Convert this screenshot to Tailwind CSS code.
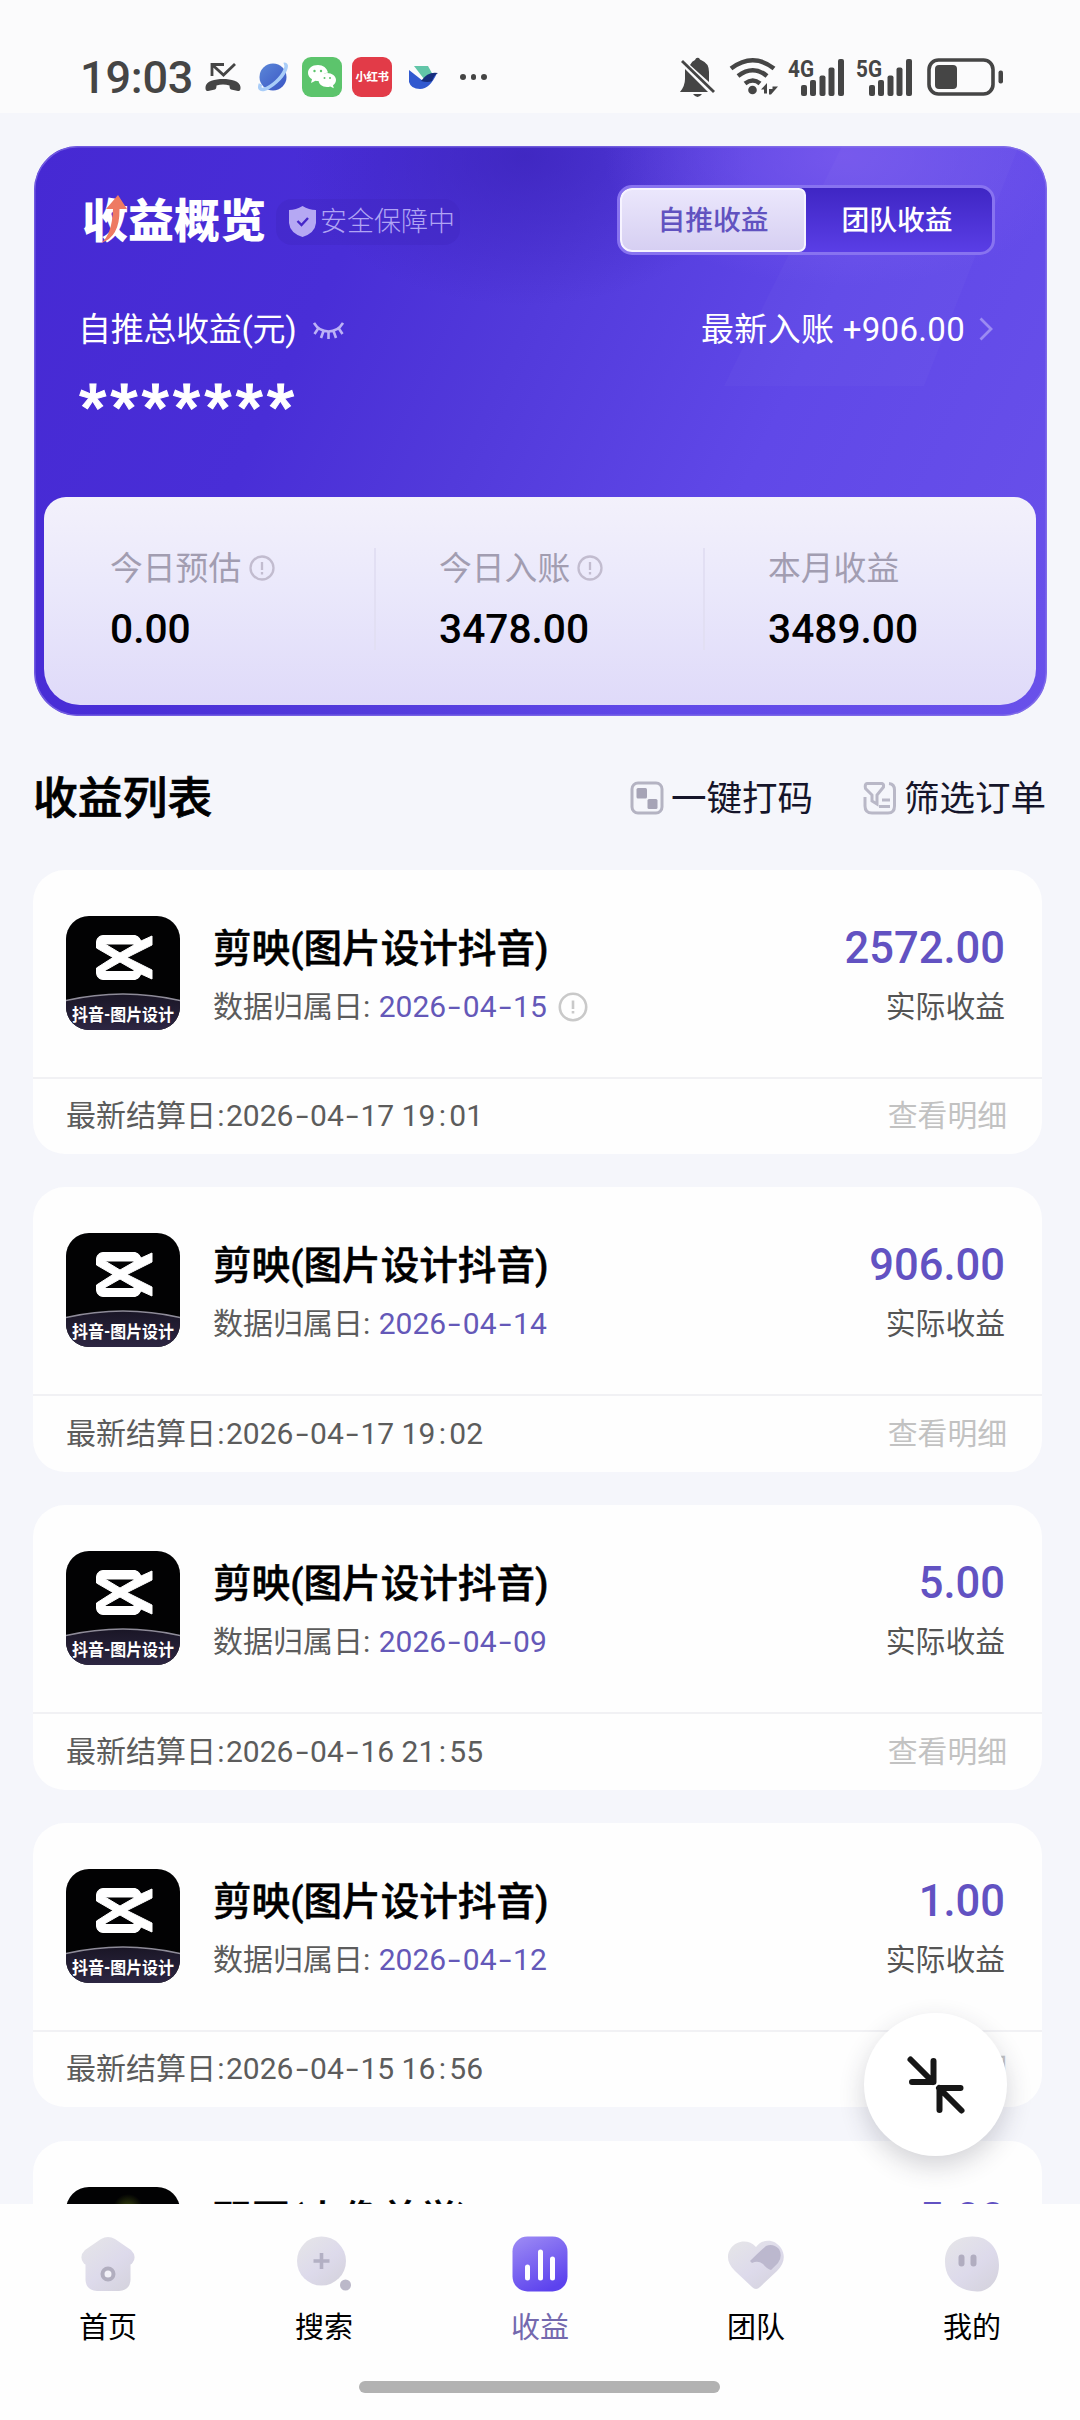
<!DOCTYPE html>
<html lang="zh-CN">
<head>
<meta charset="utf-8">
<title>收益</title>
<script src="https://cdn.jsdelivr.net/npm/@tailwindcss/browser@4"></script>
</head>
<body class="w-[1080px] h-[2420px] overflow-hidden bg-[#f5f6fb] font-[Roboto,'Noto_Sans_CJK_SC',sans-serif] text-black flex flex-col relative">

<!-- status bar -->
<header class="h-[113px] shrink-0 bg-[#fbfbfc] pl-[80px] pr-[76px] pt-[41px] flex justify-between items-start">
  <div class="flex items-center h-[72px]">
    <span class="text-[45px] leading-[72px] font-medium text-[#454545] w-[125px] pt-[2px] tracking-[-0.2px]">19:03</span>
    <svg class="w-9 h-[30px]" viewBox="0 0 36 30" fill="none" stroke="#454545"><path d="M7 14V2.500H19M7 2.500L18.500 13L30 2" stroke-width="2.800"/><path d="M0.500 25C1 19 10 17 18 17S35 19 35.500 25Q35.800 29.500 33 29L26 27.500Q24.500 27 24.500 23.500Q18 21.500 11.500 23.500Q11.500 27 10 27.500L3 29Q.200 29.500 .500 25Z" fill="#454545" stroke="none"/></svg>
    <svg class="w-[30px] h-[30px] ml-[17px]" viewBox="0 0 30 30"><defs><linearGradient id="pl" x1="0" y1="0" x2="1" y2="1"><stop stop-color="#5b87d8"/><stop offset="1" stop-color="#3a55c4"/></linearGradient></defs><circle cx="15" cy="15" r="13.500" fill="url(#pl)"/><path d="M2.500 22C-1 31 9 28 18 20S31 1 26 2.500" fill="none" stroke="#a9cdf8" stroke-width="3.600"/></svg>
    <svg class="w-10 h-10 ml-[14px]" viewBox="0 0 40 40"><rect width="40" height="40" rx="9" fill="#5cc46c"/><path d="M16 8C10 8 6 11.500 6 16c0 2.500 1.500 4.700 4 6.200L9 26l4.500-2.300q2 .500 4 .300A9 9 0 0 1 26 15.500C25 11 21 8 16 8Z" fill="#fff"/><path d="M25 16c5 0 9 3 9 7 0 2.200-1.200 4-3 5.300l.800 3-3.600-1.800Q27 30 25 30c-5 0-8.500-3-8.500-7s3.500-7 8.500-7Z" fill="#fff"/><g fill="#5cc46c"><circle cx="12.500" cy="14" r="1.200"/><circle cx="19" cy="14" r="1.200"/><circle cx="22.500" cy="21" r="1"/><circle cx="28" cy="21" r="1"/></g></svg>
    <span class="w-10 h-10 ml-[10px] rounded-[9px] bg-[#e23b48] text-white font-bold text-[11.500px] leading-10 text-center tracking-[-0.5px]">小红书</span>
    <svg class="w-[30px] h-6 ml-[16px]" viewBox="0 0 30 24"><path d="M6 1H20L25 10 16 14Z" fill="#62c5a8"/><path d="M1 5L15 16 27 9Q29 9 29 8Q22 24 12 24Q3 24 1 17Z" fill="#3159cf"/><path d="M13 16Q20 6 30 8Q26 10 24 16Q20 18 13 16Z" fill="#162d7d"/></svg>
    <span class="flex gap-[5px] ml-[22px]"><i class="w-[5.500px] h-[5.500px] rounded-full bg-[#444]"></i><i class="w-[5.500px] h-[5.500px] rounded-full bg-[#444]"></i><i class="w-[5.500px] h-[5.500px] rounded-full bg-[#444]"></i></span>
  </div>
  <svg class="w-[324px] h-[40px] mt-[16px] overflow-visible" viewBox="0 0 324 40" fill="#454545">
    <path d="M5 12L28 35H0Q5 29 5 22Z M10 8Q12 4 15 3Q16 0 19 1Q20 3 21 3Q29 6 29 15V25Z"/><path d="M2 4L34 35" stroke="#454545" stroke-width="2.800"/><path d="M13 37H22Q17.500 43 13 37Z"/>
    <g fill="none" stroke="#454545" stroke-width="4.500"><path d="M51 11.500Q73 -5 94 11.500"/><path d="M58 19Q73 7.500 87 19"/><path d="M65 26.500Q73 20.500 80 26.500"/></g><circle cx="72.500" cy="33" r="4.300"/><path d="M81 32.500l6-6.500v10.500h-3V32.500Z M89 26v6h3.500v-2.500h5.500L91 37.500h-2Z"/>
    <g><rect x="121" y="28" width="6" height="11" rx="2"/><rect x="130" y="23" width="6" height="16" rx="2"/><rect x="139.500" y="18.500" width="6" height="20.500" rx="2"/><rect x="148.500" y="10.500" width="6" height="28.500" rx="2"/><rect x="158" y="2" width="6" height="37" rx="2"/></g>
    <g><rect x="189" y="28" width="6" height="11" rx="2"/><rect x="198" y="23" width="6" height="16" rx="2"/><rect x="207.500" y="18.500" width="6" height="20.500" rx="2"/><rect x="216.500" y="10.500" width="6" height="28.500" rx="2"/><rect x="226" y="2" width="6" height="37" rx="2"/></g>
    <g font-size="24" font-weight="700" font-family="Roboto"><text x="108" y="19.500" textLength="26" lengthAdjust="spacingAndGlyphs">4G</text><text x="176" y="19.500" textLength="26" lengthAdjust="spacingAndGlyphs">5G</text></g>
    <rect x="249" y="3" width="64" height="34" rx="9.500" fill="none" stroke="#454545" stroke-width="3.600"/><rect x="255" y="8" width="22" height="24" rx="4"/><rect x="318.500" y="13.500" width="4.500" height="13" rx="2"/>
  </svg>
</header>

<main class="h-[2091px] shrink-0 overflow-hidden flex flex-col pt-[33px]">

  <!-- overview card -->
  <section class="relative w-[1013px] h-[570px] ml-[34px] shrink-0 rounded-[44px] overflow-hidden bg-[linear-gradient(115deg,#4629d3_0%,#492ed7_28%,#523adb_45%,#6048e8_68%,#6951ea_100%)] pl-[47px] pr-[51px]">
    <svg class="absolute inset-0 w-full h-full" viewBox="0 0 1013 570" preserveAspectRatio="none"><defs>
      <radialGradient id="dk"><stop stop-color="#3a22b8" stop-opacity=".7"/><stop offset="1" stop-color="#3a22b8" stop-opacity="0"/></radialGradient>
      <radialGradient id="lt"><stop stop-color="#7a5bee" stop-opacity=".8"/><stop offset="1" stop-color="#7a5bee" stop-opacity="0"/></radialGradient></defs>
      <ellipse cx="490" cy="10" rx="230" ry="150" fill="url(#dk)"/><ellipse cx="810" cy="10" rx="240" ry="130" fill="url(#lt)"/>
      <path d="M808 0H985L890 240H690Z" fill="#fff" opacity=".025"/>
      <rect x=".75" y=".75" width="1011.500" height="568.500" rx="43.500" fill="none" stroke="#8d7be8" stroke-opacity=".6" stroke-width="1.500"/></svg>
    <div class="relative h-[69px] mt-[39px] flex items-center">
      <h1 class="relative text-[46px] leading-[66px] pt-[3px] ml-[1px] font-black text-white">收益概览
        <svg class="absolute left-[18px] top-[8px] w-[28px] h-[50px]" viewBox="0 0 28 50"><path d="M1 50Q12 42 13 16H6L18 2L27 16H19.500Q20 44 1 50Z" fill="#ee7a62"/></svg>
      </h1>
      <span class="ml-[10px] mt-[4px] h-[46px] w-[184px] rounded-[16px] bg-[#3f25bd]/35 pl-[13px] flex items-center text-[27px] leading-[46px] font-light text-[#b0a4f4]">
        <svg class="w-[27px] h-[31px] mr-[4px] shrink-0" viewBox="0 0 27 31"><path d="M13.500 0Q20 4 27 4V17Q26 27 13.500 31Q1 27 0 17V4Q7 4 13.500 0Z" fill="#b5a8f3"/><path d="M8.500 15L12.500 19L19 12" fill="none" stroke="#4527c8" stroke-width="2.400"/></svg>安全保障中</span>
      <div class="ml-auto w-[378px] h-[70px] rounded-[15px] border-[3px] border-[#8873f0] bg-[linear-gradient(#3f26c4,#5a3ee6)] flex text-[27.800px] leading-[64px] font-medium text-center text-white mr-[1px]">
        <span class="w-[186px] h-[64px] rounded-[12px] rounded-r-[7px] border-2 border-[#f6f3ff] bg-[linear-gradient(#ebe7fc,#d6cff2)] text-[#6152c0] leading-[62px]">自推收益</span>
        <span class="flex-1 pr-[4px] leading-[66px]">团队收益</span>
      </div>
    </div>
    <div class="relative h-[50px] mt-[49px] flex items-center text-white text-[33px] -ml-[3px] pt-[1px]">
      <span class="tracking-[-0.3px] mt-[2px]">自推总收益(元)</span>
      <svg class="w-[31px] h-[20px] ml-[17px] mt-[5px]" viewBox="0 0 31 20" fill="none" stroke="#bdb2f6" stroke-width="2.600"><path d="M1 2Q6 10.500 15.500 10.500T30 2"/><path d="M5.500 7L1.500 13M10.500 10L8 17M15.500 10.500V18M20.500 10L23 17M25.500 7L29.500 13"/></svg>
      <span class="ml-auto mt-[2px] tracking-[0.3px]">最新入账 +906.00</span>
      <svg class="w-[14px] h-[24px] ml-[14px] mr-[3px]" viewBox="0 0 14 24" fill="none" stroke="#9b8bf2" stroke-width="2.800"><path d="M1.500 1.500L12 12L1.500 22.500"/></svg>
    </div>
    <div class="relative text-white font-black text-[58px] leading-[60px] mt-[22px] tracking-[4.300px] -ml-[2px] [-webkit-text-stroke:1px_white]">*******</div>
    <!-- stats panel -->
    <div class="absolute left-[10px] right-[11px] top-[351px] h-[208px] rounded-t-[22px] rounded-b-[36px] bg-[linear-gradient(#f3f1fb,#eae8fb_45%,#dfdaf9)] pt-[47px] pl-[66px] flex">
      <div class="w-[329px] relative"><div class="text-[32.800px] leading-[50px] text-[#a29db1] flex items-center">今日预估<svg class="w-[26px] h-[26px] ml-[8px] -mt-[2px]" viewBox="0 0 26 26" fill="none" stroke="#c2bccf" stroke-width="2.300"><circle cx="13" cy="13" r="11.500"/><path d="M13 7V15M13 17V19.500"/></svg></div><div class="text-[40.700px] leading-[56px] mt-[7px] font-medium">0.00</div><i class="absolute right-[63px] top-[4px] w-[2px] h-[102px] bg-[#e2dff3]"></i></div>
      <div class="w-[329px] relative"><div class="text-[32.800px] leading-[50px] text-[#a29db1] flex items-center">今日入账<svg class="w-[26px] h-[26px] ml-[7px] -mt-[2px]" viewBox="0 0 26 26" fill="none" stroke="#c2bccf" stroke-width="2.300"><circle cx="13" cy="13" r="11.500"/><path d="M13 7V15M13 17V19.500"/></svg></div><div class="text-[40.700px] leading-[56px] mt-[7px] font-medium">3478.00</div><i class="absolute right-[63px] top-[4px] w-[2px] h-[102px] bg-[#e2dff3]"></i></div>
      <div><div class="text-[32.800px] leading-[50px] text-[#a29db1]">本月收益</div><div class="text-[40.700px] leading-[56px] mt-[7px] font-medium">3489.00</div></div>
    </div>
  </section>

  <!-- list header -->
  <div class="h-[70px] mt-[47px] shrink-0 pl-[33px] pr-[34px] flex items-center text-[35.500px] text-[#15152a]">
    <h2 class="text-[44.800px] font-medium [-webkit-text-stroke:0.7px_black] text-black mr-auto mt-[2px]">收益列表</h2>
    <svg class="w-[34px] h-[34px] mr-[7px]" viewBox="0 0 34 34"><rect x="2" y="2" width="30" height="30" rx="6" fill="none" stroke="#b4b3c2" stroke-width="3"/><rect x="6.500" y="7" width="10.500" height="10.500" rx="1.500" fill="#a6a4b6"/><rect x="17.500" y="18" width="10" height="10" rx="1.500" fill="#a6a4b6"/></svg>
    <span class="mt-[3px]">一键打码</span>
    <svg class="w-[34px] h-[34px] ml-[50px] mr-[7px]" viewBox="0 0 34 34" fill="none" stroke="#b9b8c7" stroke-width="3"><path d="M26 2.500Q31.500 3 31.500 9V25Q31.500 32 25 32H9Q2 32 2 25V16"/><path d="M4 2.500H19Q21 3 20.500 6L14 14V23L9 20V14L2.500 7.500Q1.500 3 4 2.500Z"/><path d="M19 19H27M16 25.500H27"/></svg>
    <span class="mt-[3px]">筛选订单</span>
  </div>

  <div id="list" class="mt-[36.500px] ml-[33px] w-[1009px] flex flex-col gap-[33.250px]"></div>
</main>

<!-- tab bar -->
<nav class="h-[216px] shrink-0 bg-[#fefefe] pt-[32px] relative">
  <div class="grid grid-cols-5 text-center text-[29px] leading-[44px]">
    <div class="flex flex-col items-center gap-[14px]"><svg class="w-14 h-14" viewBox="0 0 56 56"><defs><linearGradient id="g" x1="0" y1="0" x2=".8" y2="1"><stop stop-color="#e6e6e8"/><stop offset=".6" stop-color="#dddaeb"/><stop offset="1" stop-color="#d5d3de"/></linearGradient></defs><path d="M21 3Q28-1 35 3L51 14Q57 20 53 26Q52 28 50.500 28.500V44Q50 54 39 55H17Q6 54 5.500 44V28.500Q4 28 3 26Q-1 20 5 14Z" fill="url(#g)"/><circle cx="28" cy="38" r="5.500" fill="#f2f1f8" stroke="#b1aebf" stroke-width="4"/></svg>首页</div>
    <div class="flex flex-col items-center gap-[14px]"><svg class="w-14 h-14" viewBox="0 0 56 56"><circle cx="25.500" cy="25" r="24.500" fill="url(#g)"/><path d="M25.500 17V33M17.500 25H33.500" stroke="#b3b0c4" stroke-width="3.600"/><circle cx="49.500" cy="49" r="5.500" fill="#bbb8c9"/></svg>搜索</div>
    <div class="flex flex-col items-center gap-[14px] text-[#7469ae]"><svg class="w-14 h-14" viewBox="0 0 56 56"><defs><linearGradient id="p" x1=".1" y1="0" x2=".6" y2="1"><stop stop-color="#9c8af4"/><stop offset="1" stop-color="#5c42ee"/></linearGradient></defs><rect x=".5" y=".5" width="55" height="55" rx="15" fill="url(#p)"/><path d="M15.500 31V42M28.500 16V42M40.500 23V42" stroke="#fff" stroke-width="5" stroke-linecap="round"/></svg>收益</div>
    <div class="flex flex-col items-center gap-[14px]"><svg class="w-[58px] h-14" viewBox="0 0 58 56"><path d="M29 11C36 2 48 3 54 12C59 20 57 28 50 35L33 51Q29 55 25 51L8 35C0 27-1 19 4 12C10 4 22 3 29 11Z" fill="url(#g)"/><path d="M23 25Q33 15 39 10Q46 7 52 13Q56 20 51 27L44 34Q40 33 36 28Q31 24 25 27Z" fill="#bcb8ce"/></svg>团队</div>
    <div class="flex flex-col items-center gap-[14px]"><svg class="w-14 h-14" viewBox="0 0 56 56"><path d="M28 .5C44 0 55 12 55 29S44 56 33 55.500C14 55 1 43 1 26S12 1 28 .5Z" fill="url(#g)"/><rect x="14.500" y="18.500" width="6" height="12" rx="3" fill="#b1adc0"/><rect x="26.500" y="18.500" width="6" height="12" rx="3" fill="#b1adc0"/></svg>我的</div>
  </div>
  <i class="block w-[361px] h-3 rounded-full bg-[#b2b2b2] ml-[359px] mt-[31px]"></i>
</nav>

<!-- floating collapse button -->
<button class="absolute left-[864px] top-[2013px] w-[143px] h-[143px] rounded-full bg-white shadow-[0_10px_26px_rgba(40,40,60,0.2)] flex items-center justify-center">
  <svg class="w-[60px] h-[60px]" viewBox="0 0 60 60" fill="none" stroke="#161616" stroke-width="6" stroke-linecap="round" stroke-linejoin="round"><path d="M4.500 4.500L27 27M27.500 6V27H6M55.500 55.500L33 33M33.500 55V33H54.500"/></svg>
</button>

<script>
  const dash = '<span class="inline-block w-[16.6px] text-center"><span class="inline-block scale-x-150">-</span></span>';
  const fmt = s => s.replace(/-/g, dash).replace(':', '<span class="inline-block w-[14px] text-center">:</span>');
  const rows = [
    ['剪映(图片设计抖音)', '2026-04-15', '2572.00', '2026-04-17 19:01', true],
    ['剪映(图片设计抖音)', '2026-04-14', '906.00', '2026-04-17 19:02'],
    ['剪映(图片设计抖音)', '2026-04-09', '5.00', '2026-04-16 21:55'],
    ['剪映(图片设计抖音)', '2026-04-12', '1.00', '2026-04-15 16:56'],
    ['醒图(人像美学)', '2026-04-12', '5.00', '2026-04-15 16:56', false, true],
  ];
  const logo = `<svg class="w-[114px] h-[114px] shrink-0" viewBox="0 0 114 114"><defs><clipPath id="ic"><rect width="114" height="114" rx="23"/></clipPath><linearGradient id="nv" x1="0" y1="0" x2="0" y2="1"><stop stop-color="#1a1626"/><stop offset="1" stop-color="#2e2744"/></linearGradient></defs><g clip-path="url(#ic)"><rect width="114" height="114" fill="#020203"/><path d="M-2 85Q57 71 116 85V116H-2Z" fill="url(#nv)" stroke="#8e8b98" stroke-width="1.600"/></g>
    <path d="M37 19.500H69Q73 20 75 25L86 20V29L61 41.500L86 54V63L75 58Q73 63 69 63.500H37Q31 63 30.500 57V52L47 41.500L30.500 32V26Q31 20 37 19.500ZM39 28L54 37L68 29V28ZM54 46L39 54.500V55.500H68V54Z" fill="#fff" stroke="#fff" stroke-width="1" fill-rule="evenodd"/>
    <text x="57" y="105" text-anchor="middle" font-size="17.500" font-weight="700" fill="#fff" textLength="102" lengthAdjust="spacingAndGlyphs">抖音-图片设计</text></svg>`;
  const dark = `<svg class="w-[114px] h-[114px] shrink-0" viewBox="0 0 114 114"><defs><radialGradient id="gl"><stop stop-color="#3d4a10"/><stop offset="1" stop-color="#020203"/></radialGradient></defs><rect width="114" height="114" rx="23" fill="#020203"/><circle cx="62" cy="22" r="15" fill="url(#gl)"/></svg>`;
  const info = `<svg class="w-[30px] h-[30px] ml-[11px]" viewBox="0 0 30 30" fill="none" stroke="#c9c9c9" stroke-width="2.600"><circle cx="15" cy="15" r="13.200"/><path d="M15 8.500V17M15 19V21.500"/></svg>`;
  document.getElementById('list').innerHTML = rows.map(([t, d, a, s, i, k]) => `
    <article class="h-[284.5px] shrink-0 rounded-[32px] bg-[#fefefe]">
      <div class="h-[207px] pt-[46px] pl-[33px] pr-[37px] flex">
        ${k ? dark : logo}
        <div class="ml-[33px]">
          <div class="text-[38.6px] leading-[60px] pt-[3px] font-medium [-webkit-text-stroke:0.5px_black]">${t}</div>
          <div class="text-[30px] leading-[44px] mt-[6px] text-[#5c5c5c] flex items-center whitespace-pre">数据归属日: <span class="text-[#6458b8] ml-[1px]">${fmt(d)}</span>${i ? info : ''}</div>
        </div>
        <div class="ml-auto text-right">
          <div class="text-[43.5px] leading-[60px] pt-[3px] font-medium text-[#6252c2]">${a}</div>
          <div class="text-[29.8px] leading-[44px] mt-[6px] text-[#555]">实际收益</div>
        </div>
      </div>
      <div class="h-[77px] border-t-2 border-[#f1f1f4] pl-[33px] pr-[35px] flex justify-between items-center text-[30px] leading-[44px] text-[#5c5c5c]">
        <span>最新结算日<span class="inline-block w-[10px] text-center">:</span>${fmt(s)}</span><span class="text-[#c2c2c2] text-[29.8px]">查看明细</span>
      </div>
    </article>`).join('');
</script>
</body>
</html>
